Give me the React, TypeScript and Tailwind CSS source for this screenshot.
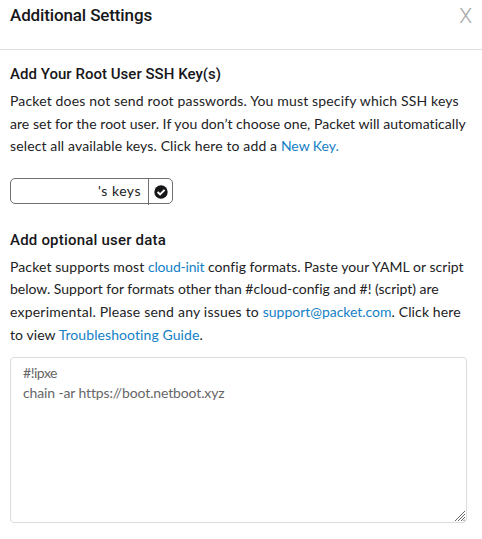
import type { ReactNode } from 'react';

function Line({ className, children }: { className: string; children: ReactNode }) {
  return <span className={`block whitespace-nowrap ${className}`}>{children}</span>;
}

function Link({ className = '', children }: { className?: string; children: ReactNode }) {
  return (
    <a href="#" className={`text-[#1580c6] ${className}`}>
      {children}
    </a>
  );
}

export default function App() {
  return (
    <div className="h-[539px] w-[482px] overflow-hidden bg-white font-[Lato,sans-serif] text-[14px] text-[#222224]">
      <header className="flex h-[50px] items-start justify-between border-b border-[#dedede] pl-[10px] pr-[10px]">
        <h1 className="pt-[4px] font-[Roboto,sans-serif] text-[17px] font-medium leading-[22px] tracking-[-0.13px] text-[#17171a]">
          Additional Settings
        </h1>
        <button
          aria-label="Close"
          className="pt-[4px] font-[Roboto,sans-serif] text-[21px] font-light leading-[24px] text-[#a8a8a8]"
        >
          X
        </button>
      </header>

      <section className="pl-[10px] pt-[13px]">
        <h2 className="font-[Roboto,sans-serif] text-[15px] font-medium leading-[22px] tracking-[0.03px] text-[#17171a]">
          Add Your Root User SSH Key(s)
        </h2>
        <p className="pt-[5px] leading-[22.6px]">
          <Line className="tracking-[0.16px]">
            Packet does not send root passwords. You must specify which SSH keys
          </Line>
          <Line className="tracking-[0.045px]">
            are set for the root user. If you don’t choose one, Packet will automatically
          </Line>
          <Line className="tracking-[0.13px]">
            select all available keys. Click here to add a <Link className="tracking-[-0.03px]">New Key.</Link>
          </Line>
        </p>
        <div className="mt-[20px] flex h-[26px] w-[163px] rounded-[5px] border border-[#6f6f6f]">
          <span className="flex-1 pr-[7px] text-right leading-[24px] tracking-[0.5px]">'s keys</span>
          <span className="-mb-[2px] flex w-[24px] items-center justify-center border-l border-[#6f6f6f]">
            <svg width="14" height="14" viewBox="0 0 14 14">
              <circle cx="7" cy="7" r="6.7" fill="#17171a" />
              <path d="m3.6 7 2.5 2.4 4.5-4.5" fill="none" stroke="#fff" strokeWidth="2" />
            </svg>
          </span>
        </div>
      </section>

      <section className="pl-[10px] pt-[25px]">
        <h2 className="font-[Roboto,sans-serif] text-[15px] font-medium leading-[22px] tracking-[0.2px] text-[#17171a]">
          Add optional user data
        </h2>
        <p className="pt-[5px] leading-[22.6px]">
          <Line className="tracking-[0.05px]">
            <span className="tracking-[0.1px]">Packet supports most </span>
            <Link className="tracking-[-0.2px]">cloud-init</Link> config formats. Paste your YAML or script
          </Line>
          <Line className="tracking-[-0.014px]">
            below. Support for formats other than #cloud-config and #! (script) are
          </Line>
          <Line className="tracking-[0.139px]">
            <span className="tracking-[0.21px]">experimental. Please send any issues to </span>
            <Link className="tracking-[-0.03px]">support@packet.com</Link>. Click here
          </Line>
          <Line className="tracking-[0.083px]">
            to view <Link>Troubleshooting Guide</Link>.
          </Line>
        </p>
        <div className="relative mt-[11px] h-[166px] w-[457px] rounded-[4px] border border-[#dcdcdc] pl-[12px] pt-[5px] leading-[20px] text-[#666]">
          <Line className="tracking-[-0.48px]">#!ipxe</Line>
          <Line className="tracking-[-0.132px]">chain -ar https://boot.netboot.xyz</Line>
          <svg
            className="absolute bottom-[1px] right-[1px]"
            width="10"
            height="10"
            viewBox="0 0 10 10"
            stroke="#666"
            strokeWidth="1"
          >
            <path d="M0 10 10 0M3 10 10 3M6 10 10 6M8.5 10 10 8.5" />
          </svg>
        </div>
      </section>
    </div>
  );
}
